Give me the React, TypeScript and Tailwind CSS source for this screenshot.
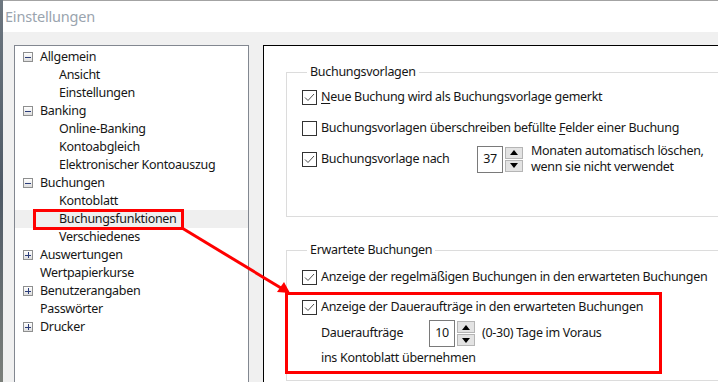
import type { ReactNode } from "react";

type TreeRow = {
  label: string;
  level: 0 | 1;
  expander?: "minus" | "plus";
  selected?: boolean;
};

const treeRows: TreeRow[] = [
  { label: "Allgemein", level: 0, expander: "minus" },
  { label: "Ansicht", level: 1 },
  { label: "Einstellungen", level: 1 },
  { label: "Banking", level: 0, expander: "minus" },
  { label: "Online-Banking", level: 1 },
  { label: "Kontoabgleich", level: 1 },
  { label: "Elektronischer Kontoauszug", level: 1 },
  { label: "Buchungen", level: 0, expander: "minus" },
  { label: "Kontoblatt", level: 1 },
  { label: "Buchungsfunktionen", level: 1, selected: true },
  { label: "Verschiedenes", level: 1 },
  { label: "Auswertungen", level: 0, expander: "plus" },
  { label: "Wertpapierkurse", level: 0 },
  { label: "Benutzerangaben", level: 0, expander: "plus" },
  { label: "Passwörter", level: 0 },
  { label: "Drucker", level: 0, expander: "plus" },
];

function Expander({ kind }: { kind: "minus" | "plus" }) {
  return (
    <span className="relative flex h-[10px] w-[10px] items-center justify-center border border-[#8e8f8f] bg-gradient-to-b from-white to-[#dedede]">
      <span className="absolute h-[1px] w-[6px] bg-[#2c3e7a]" />
      {kind === "plus" && <span className="absolute h-[6px] w-[1px] bg-[#2c3e7a]" />}
    </span>
  );
}

function Checkbox({ checked }: { checked: boolean }) {
  return (
    <span className="flex h-[15px] w-[15px] shrink-0 items-center justify-center border border-[#333] bg-white">
      {checked && (
        <svg width="13" height="13" viewBox="0 0 13 13">
          <polyline points="2,6.5 5,9.5 11,3" fill="none" stroke="#505050" strokeWidth="1" />
        </svg>
      )}
    </span>
  );
}

function Spin({ value }: { value: string }) {
  return (
    <div className="flex h-[27px] shrink-0 items-stretch gap-[2px]">
      <div className="flex w-[26px] items-center justify-center border border-[#7a7a7a] bg-white">
        {value}
      </div>
      <div className="flex w-[18px] flex-col gap-[1px] py-[1px]">
        <div className="flex flex-1 items-center justify-center border border-[#b5b5b5] bg-[#e3e3e3]">
          <svg width="8" height="5" viewBox="0 0 8 5">
            <polygon points="0,5 8,5 4,0" fill="#000" />
          </svg>
        </div>
        <div className="flex flex-1 items-center justify-center border border-[#b5b5b5] bg-[#e3e3e3]">
          <svg width="8" height="5" viewBox="0 0 8 5">
            <polygon points="0,0 8,0 4,5" fill="#000" />
          </svg>
        </div>
      </div>
    </div>
  );
}

function Group({ title, children, className }: { title: string; children: ReactNode; className: string }) {
  return (
    <fieldset className={`border border-r-0 border-[#dcdcdc] pl-[15px] ${className}`}>
      <legend className="ml-[5px] px-[3px] leading-[16px]">{title}</legend>
      {children}
    </fieldset>
  );
}

function CheckRow({ checked, children }: { checked: boolean; children: ReactNode }) {
  return (
    <div className="flex h-[18px] items-center gap-[4px] whitespace-nowrap">
      <Checkbox checked={checked} />
      <span>{children}</span>
    </div>
  );
}

export default function App() {
  return (
    <div className="relative h-[382px] w-[718px] overflow-hidden bg-[#f0f0f0] font-['Noto_Sans',sans-serif] text-[12.5px] tracking-[-0.3px] text-[#161616]">
      <div className="flex h-full">
        {/* desktop edge behind the window */}
        <div className="w-[3px] shrink-0 bg-gradient-to-b from-[#6d7780] via-[#4f5a66] to-[#7b7f7a]" />

        <div className="flex min-w-0 flex-1 flex-col border-t border-[#a3a3a3]">
          {/* Title bar */}
          <div className="flex h-[31px] shrink-0 items-center bg-white pl-[2px] text-[14.5px] tracking-[-0.2px] text-[#9aa4ae]">
            Einstellungen
          </div>

          <div className="flex flex-1 pl-[11px] pt-[13px]">
            {/* Tree */}
            <div className="w-[235px] shrink-0 border border-b-0 border-[#828790] bg-white pt-[2px]">
              {treeRows.map((row) => (
                <div
                  key={row.label}
                  className={`flex h-[18px] items-center whitespace-nowrap ${row.selected ? "bg-[#efefef]" : ""}`}
                >
                  <span className="ml-[8px] flex w-[10px] shrink-0">
                    {row.expander && <Expander kind={row.expander} />}
                  </span>
                  <span className={row.level === 1 ? "ml-[26px]" : "ml-[7px]"}>{row.label}</span>
                </div>
              ))}
            </div>

            <div className="w-[14px] shrink-0" />

            {/* Settings page */}
            <div className="flex min-w-0 flex-1 flex-col border-l border-t border-black bg-white pl-[22px] pt-[18px]">
              <Group title="Buchungsvorlagen" className="pb-[41px]">
                <div className="flex flex-col pt-[8px]">
                  <CheckRow checked>
                    <span className="underline underline-offset-2">N</span>eue Buchung wird als Buchungsvorlage gemerkt
                  </CheckRow>
                  <div className="mt-[13px]">
                    <CheckRow checked={false}>
                      Buchungsvorlagen überschreiben befüllte <span className="underline underline-offset-2">F</span>elder einer Buchung
                    </CheckRow>
                  </div>
                  <div className="mt-[6px] flex items-center whitespace-nowrap">
                    <div className="w-[175px] shrink-0">
                      <CheckRow checked>Buchungsvorlage nach</CheckRow>
                    </div>
                    <Spin value="37" />
                    <div className="pl-[8px] leading-[16px]">
                      <div>Monaten automatisch löschen,</div>
                      <div>wenn sie nicht verwendet</div>
                    </div>
                  </div>
                </div>
              </Group>

              <Group title="Erwartete Buchungen" className="mt-[25px] pb-[13px]">
                <div className="flex flex-col pt-[10px]">
                  <CheckRow checked>Anzeige der regelmäßigen Buchungen in den erwarteten Buchungen</CheckRow>
                  <div className="mt-[12px]">
                    <CheckRow checked>Anzeige der Daueraufträge in den erwarteten Buchungen</CheckRow>
                  </div>
                  <div className="mt-[4px] flex items-center whitespace-nowrap pl-[19px]">
                    <span className="w-[108px] shrink-0">Daueraufträge</span>
                    <Spin value="10" />
                    <span className="pl-[7px]">(0-30) Tage im Voraus</span>
                  </div>
                  <div className="mt-[2px] whitespace-nowrap pl-[19px] leading-[18px]">ins Kontoblatt übernehmen</div>
                </div>
              </Group>
            </div>
          </div>
        </div>
      </div>

      {/* Red annotations */}
      <div className="absolute left-[33px] top-[209px] h-[21px] w-[151px] border-[3px] border-[#ff0000]" />
      <div className="absolute left-[285px] top-[292px] h-[82px] w-[377px] border-[3px] border-[#ff0000]" />
      <svg className="absolute left-0 top-0" width="718" height="382" viewBox="0 0 718 382">
        <line x1="182" y1="228" x2="281" y2="288" stroke="#ff0000" strokeWidth="3" />
        <polygon points="290,293 277,292 284,282" fill="#ff0000" />
      </svg>
    </div>
  );
}
